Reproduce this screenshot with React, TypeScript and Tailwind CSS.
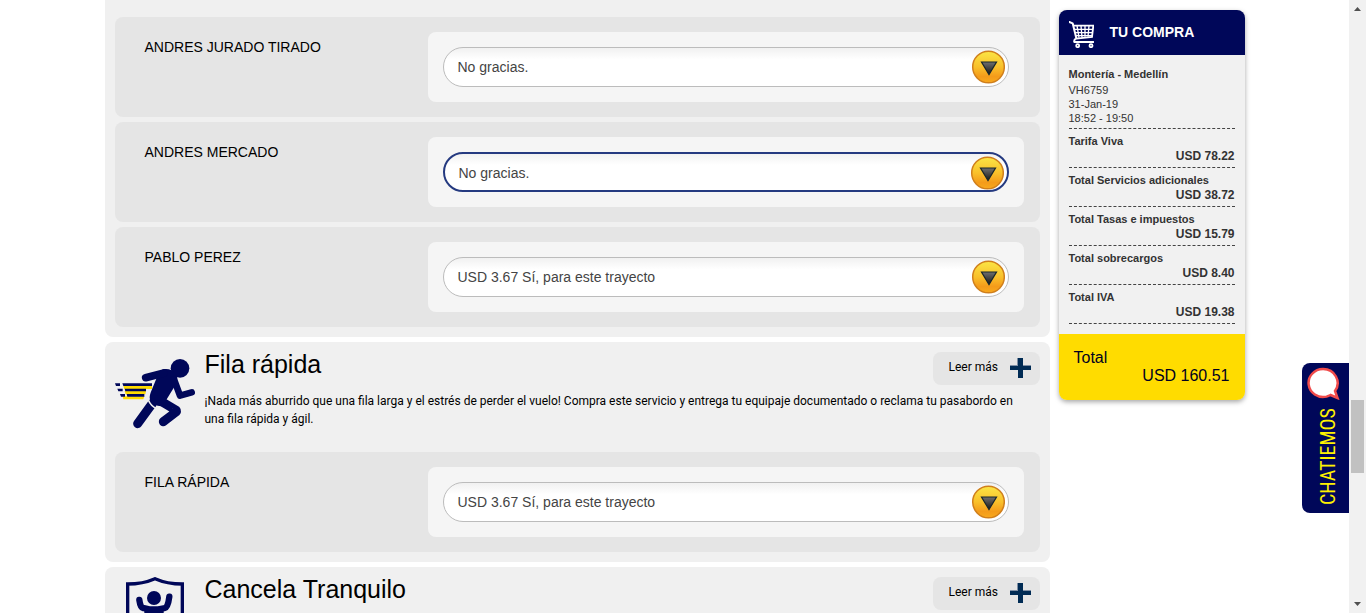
import { useId, type ReactNode } from "react";

const charges = [
  { label: "Tarifa Viva", amount: "USD 78.22" },
  { label: "Total Servicios adicionales", amount: "USD 38.72" },
  { label: "Total Tasas e impuestos", amount: "USD 15.79" },
  { label: "Total sobrecargos", amount: "USD 8.40" },
  { label: "Total IVA", amount: "USD 19.38" },
];

const NO = "No gracias.";
const YES = "USD 3.67 Sí, para este trayecto";

function ArrowBadge() {
  const id = useId();
  return (
    <svg viewBox="0 0 34 34" className="h-[34px] w-[34px]" aria-hidden="true">
      <defs>
        <linearGradient id={id + "o"} x1="0" y1="0" x2="0" y2="1">
          <stop offset="0" stopColor="#fbe645" />
          <stop offset="0.5" stopColor="#f9c02b" />
          <stop offset="0.8" stopColor="#f49b1a" />
          <stop offset="1" stopColor="#f8a91c" />
        </linearGradient>
        <linearGradient id={id + "t"} x1="0" y1="0" x2="0" y2="1">
          <stop offset="0" stopColor="#707070" />
          <stop offset="1" stopColor="#161616" />
        </linearGradient>
      </defs>
      <circle cx="17.5" cy="17" r="15.8" fill={`url(#${id}o)`} stroke="#d07f1c" strokeWidth="1.5" />
      <path d="M10.500 12h15l-7.500 12.500z" fill={`url(#${id}t)`} stroke="#17262b" strokeWidth="1.200" />
    </svg>
  );
}

function OptionRow({ label, value, active = false }: { label: string; value: string; active?: boolean }) {
  const id = useId();
  return (
    <div className="flex h-[100px] rounded-lg bg-[#e5e5e5] py-[15px] pr-4">
      <label htmlFor={id} className="w-[313px] shrink-0 pl-[30px] text-sm leading-[30px] text-black">
        {label}
      </label>
      <div className="min-w-0 flex-1 rounded-lg bg-[#f5f5f5] p-[15px]">
        <div className="relative">
          <select
            id={id}
            defaultValue={value}
            className={
              active
                ? "h-10 w-full appearance-none rounded-[20px] border-2 border-[#253a80] bg-white bg-linear-to-b from-[#f1f1f1] to-white to-30% px-3.5 pt-0.5 text-sm text-[#444] outline-none"
                : "h-10 w-full appearance-none rounded-[20px] border border-[#bcbcbc] bg-white bg-linear-to-b from-[#f1f1f1] to-white to-30% px-3.5 text-sm text-[#444] outline-none"
            }
          >
            <option>{NO}</option>
            <option>{YES}</option>
          </select>
          <span
            className={
              active
                ? "pointer-events-none absolute top-1 right-[5px]"
                : "pointer-events-none absolute top-[3px] right-1"
            }
          >
            <ArrowBadge />
          </span>
        </div>
      </div>
    </div>
  );
}

function ReadMore() {
  return (
    <button className="flex h-[33px] w-[107px] shrink-0 items-center justify-between rounded-lg bg-[#e5e5e5] pr-[9px] pb-0.5 pl-4 font-[Roboto,sans-serif] text-xs text-black">
      <span className="pb-px">Leer más</span>
      <svg viewBox="0 0 21 20" className="h-5 w-[21px]" aria-hidden="true">
        <path d="M8 0h5v8h8v4h-8v8H8v-8H0V8h8z" fill="#002b54" />
        <path d="M7.500 0v8M0 7.500h8M13 7.500h8" stroke="#8090a5" strokeWidth="1" />
      </svg>
    </button>
  );
}

function Service({
  icon,
  title,
  text,
  children,
}: {
  icon: ReactNode;
  title: string;
  text?: string;
  children?: ReactNode;
}) {
  return (
    <section className="rounded-lg bg-[#f0f0f0] p-2.5">
      <div className="flex h-[100px]">
        <div className="flex w-[90px] shrink-0 justify-start">{icon}</div>
        <div className="min-w-0 flex-1">
          <div className="flex h-10 justify-between">
            <h2 className="text-[25px] leading-6 text-black">{title}</h2>
            <ReadMore />
          </div>
          {text && <p className="pr-4 font-[Roboto,sans-serif] text-xs leading-[18px] text-black">{text}</p>}
        </div>
      </div>
      {children}
    </section>
  );
}

function Runner() {
  return (
    <svg viewBox="45 51 240 216" className="mt-[5px] h-[72px] w-20" aria-hidden="true">
      <path d="M70 138h86v9H73zM74 153h64l-2 10H77zM68 169h65l-3 9H70z" fill="#ffdc00" />
      <g fill="#000759">
        <path d="M45 130h15v8H48zM67 130h89v8H70zM52 146h16v8H55zM74 146h64v8H76zM60 162h15v8H63zM80 162h53v8H82z" />
        <circle cx="240" cy="85" r="28" />
        <path d="M188 88c16-4 30 2 39 12 8 12 5 25-2 37l-23 38-17 24c-15-2-35-8-36-26 0-12 9-30 20-57z" />
      </g>
      <g fill="none" stroke="#000759" strokeLinecap="round" strokeLinejoin="round">
        <path d="M137 113l55-14" strokeWidth="23" />
        <path d="M222 118l18 49 35-10" strokeWidth="20" />
        <path d="M175 179l54 32q2 2-1 5l-38 29" strokeWidth="27" />
        <path d="M158 189l-45 62" strokeWidth="27" />
      </g>
      <path d="M145 180q8 20 28 27" fill="none" stroke="#f0f0f0" strokeWidth="5" />
    </svg>
  );
}

function Shield() {
  return (
    <svg viewBox="0 0 174 216" className="ml-[11px] h-[72px] w-[58px]" aria-hidden="true">
      <path
        d="M5 21q45 0 82-16 37 16 82 16v105q0 50-82 80Q5 176 5 126z"
        fill="none"
        stroke="#000759"
        strokeWidth="10"
      />
      <circle cx="84" cy="63" r="21" fill="#000759" />
      <path
        d="M40 69q3 23 11 24l19 4h27l20-4q9-2 13-34"
        fill="none"
        stroke="#000759"
        strokeWidth="19"
        strokeLinecap="round"
      />
      <path d="M55 91h58v58H55z" fill="#000759" />
    </svg>
  );
}

function Cart() {
  return (
    <svg viewBox="57 63 75 81" className="h-[27px] w-[25px]" fill="none" stroke="#fff" aria-hidden="true">
      <path
        d="M58 66l10 4 11 45q-8 3-6 11h57"
        strokeWidth="6"
        strokeLinecap="round"
        strokeLinejoin="round"
      />
      <path d="M70 77h60l-4 34-47 5" strokeWidth="5.500" />
      <path d="M72 88h57M75 98h52M77 107h50M81 77l6 36M93 77l3 35M105 77v33M117 77l-3 33" strokeWidth="4" />
      <circle cx="83" cy="137" r="4.500" strokeWidth="5.500" />
      <circle cx="123" cy="137" r="4.500" strokeWidth="5.500" />
    </svg>
  );
}

function Summary() {
  return (
    <aside className="mt-2.5 w-[186px] shrink-0 self-start overflow-hidden rounded-lg bg-[#f1f1f1] text-[11px] text-[#333] shadow-[0_2px_5px_rgba(0,0,0,0.35)]">
      <h2 className="flex h-[45px] items-center gap-4 bg-[#000759] pb-px pl-2.5 text-sm font-bold text-white">
        <span className="pt-1">
          <Cart />
        </span>
        TU COMPRA
      </h2>
      <div className="px-2.5 py-2.5">
        <div className="border-b border-dashed border-[#444] pb-[3px] leading-[14px]">
          <p className="leading-[18px] font-bold">Montería - Medellín</p>
          <p>VH6759</p>
          <p>31-Jan-19</p>
          <p>18:52 - 19:50</p>
        </div>
        <dl>
          {charges.map((c) => (
            <div key={c.label} className="border-b border-dashed border-[#444] py-1 font-bold">
              <dt className="leading-4">{c.label}</dt>
              <dd className="text-right text-xs leading-[14px]">{c.amount}</dd>
            </div>
          ))}
        </dl>
      </div>
      <div className="bg-[#ffdc00] p-[15px] text-base leading-[18px] text-[#000020]">
        <p>Total</p>
        <p className="text-right">USD 160.51</p>
      </div>
    </aside>
  );
}

function ScrollTrack() {
  return (
    <div className="flex h-full w-[17px] shrink-0 flex-col items-center bg-[#f1f1f1]" aria-hidden="true">
      <svg viewBox="0 0 17 17" className="h-[17px] w-[17px] shrink-0">
        <path d="M5 11l3.500-4 3.500 4z" fill="#505050" />
      </svg>
      <div className="flex-[383]" />
      <div className="h-[73px] w-[13px] bg-[#c1c1c1]" />
      <div className="flex-[123]" />
      <svg viewBox="0 0 17 17" className="h-[17px] w-[17px] shrink-0">
        <path d="M5 6l3.500 4L12 6z" fill="#505050" />
      </svg>
    </div>
  );
}

export default function App() {
  return (
    <div className="flex h-screen overflow-hidden bg-white font-['Liberation_Sans',Arial,sans-serif]">
      <div className="relative min-w-0 flex-1 overflow-hidden">
        <div className="mx-auto flex max-w-[1140px] gap-[9px]">
          <main className="flex min-w-0 flex-1 flex-col gap-[5px]">
            <section className="flex flex-col gap-[5px] rounded-b-lg bg-[#f0f0f0] px-2.5 pt-[17px] pb-2.5">
              <OptionRow label="ANDRES JURADO TIRADO" value={NO} />
              <OptionRow label="ANDRES MERCADO" value={NO} active />
              <OptionRow label="PABLO PEREZ" value={YES} />
            </section>
            <Service
              icon={<Runner />}
              title="Fila rápida"
              text="¡Nada más aburrido que una fila larga y el estrés de perder el vuelo! Compra este servicio y entrega tu equipaje documentado o reclama tu pasabordo en una fila rápida y ágil."
            >
              <OptionRow label="FILA RÁPIDA" value={YES} />
            </Service>
            <Service icon={<Shield />} title="Cancela Tranquilo" />
          </main>
          <Summary />
        </div>
        <button className="absolute right-0 bottom-[100px] flex h-[150px] w-[47px] flex-col items-center justify-between rounded-l-lg bg-[#000759] pt-1 pb-2">
          <svg viewBox="0 0 33 33" className="mr-1 h-[33px] w-[33px] shrink-0" aria-hidden="true">
            <path
              d="M16 2a14.500 14 0 1 0 3.500 27.600q2-.6 4-1.600l7 3-2.500-7A14.500 14 0 0 0 16 2z"
              fill="#fff"
              stroke="#f04b4b"
              strokeWidth="2.500"
            />
          </svg>
          <span className="ml-1 rotate-180 font-['Roboto_Condensed','Liberation_Sans',sans-serif] text-[20px] leading-[26px] text-[#fff200] [writing-mode:vertical-rl]">
            CHATIEMOS
          </span>
        </button>
      </div>
      <ScrollTrack />
    </div>
  );
}
